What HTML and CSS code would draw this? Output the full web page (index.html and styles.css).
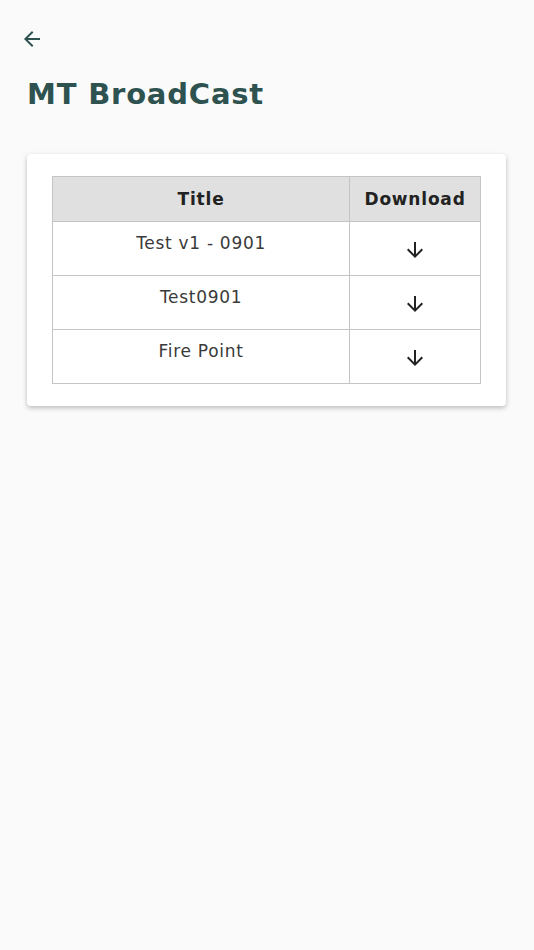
FILE: index.html
```html
<!DOCTYPE html>
<html>
<head>
<meta charset="utf-8">
<link rel="stylesheet" href="styles.css">
</head>
<body>
<div class="page">
  <div class="topbar">
    <svg class="back" viewBox="0 0 24 24" width="24" height="24"><path d="M20 11H7.83l5.59-5.59L12 4l-8 8 8 8 1.41-1.41L7.83 13H20v-2z"/></svg>
  </div>
  <h1 class="title">MT BroadCast</h1>
  <div class="card">
    <table class="grid">
      <thead>
        <tr><th class="c-title">Title</th><th class="c-dl">Download</th></tr>
      </thead>
      <tbody>
        <tr><td class="c-title">Test v1 - 0901</td><td class="c-dl"><svg class="dl" viewBox="0 0 24 24" width="24" height="24"><path d="M20 12l-1.41-1.41L13 16.17V4h-2v12.17l-5.58-5.59L4 12l8 8 8-8z"/></svg></td></tr>
        <tr><td class="c-title">Test0901</td><td class="c-dl"><svg class="dl" viewBox="0 0 24 24" width="24" height="24"><path d="M20 12l-1.41-1.41L13 16.17V4h-2v12.17l-5.58-5.59L4 12l8 8 8-8z"/></svg></td></tr>
        <tr><td class="c-title">Fire Point</td><td class="c-dl"><svg class="dl" viewBox="0 0 24 24" width="24" height="24"><path d="M20 12l-1.41-1.41L13 16.17V4h-2v12.17l-5.58-5.59L4 12l8 8 8-8z"/></svg></td></tr>
      </tbody>
    </table>
  </div>
</div>
</body>
</html>
```

FILE: styles.css
```css
html, body {
  margin: 0;
  padding: 0;
  background: #fafafa;
}
body {
  font-family: "DejaVu Sans", "Open Sans", sans-serif;
  width: 534px;
  height: 950px;
  overflow: hidden;
}
.page {
  padding: 0 28px 0 27px;
}
.topbar {
  height: 78px;
  display: flex;
  align-items: flex-start;
  padding-top: 27px;
  box-sizing: border-box;
  margin-left: -7px;
}
.back {
  fill: #2e524f;
  width: 24px;
  height: 24px;
}
.title {
  margin: 0;
  font-size: 29px;
  font-weight: bold;
  color: #2e524f;
  line-height: 32px;
  letter-spacing: 0.8px;
}
.card {
  margin-top: 44px;
  background: #fff;
  border-radius: 4px;
  box-shadow: 0 2px 5px rgba(0,0,0,0.25);
  padding: 22px 25px 22px 25px;
}
.grid {
  border-collapse: collapse;
  width: 429px;
  font-size: 17px;
  color: #3a3a3a;
}
.grid th, .grid td {
  border: 1.5px solid #c4c4c4;
  text-align: center;
}
.grid th {
  background: #e0e0e0;
  height: 44px;
  font-weight: bold;
  font-size: 17px;
  letter-spacing: 0.8px;
  color: #222;
  padding: 0;
}
.grid td {
  height: 53px;
  padding: 0;
}
.grid td.c-title {
  vertical-align: top;
  padding-top: 11px;
  box-sizing: border-box;
  letter-spacing: 0.7px;
}
.c-title { width: 297px; }
.c-dl { width: 130px; }
.dl {
  display: block;
  margin: 3px auto 0;
  fill: #222;
}
```
